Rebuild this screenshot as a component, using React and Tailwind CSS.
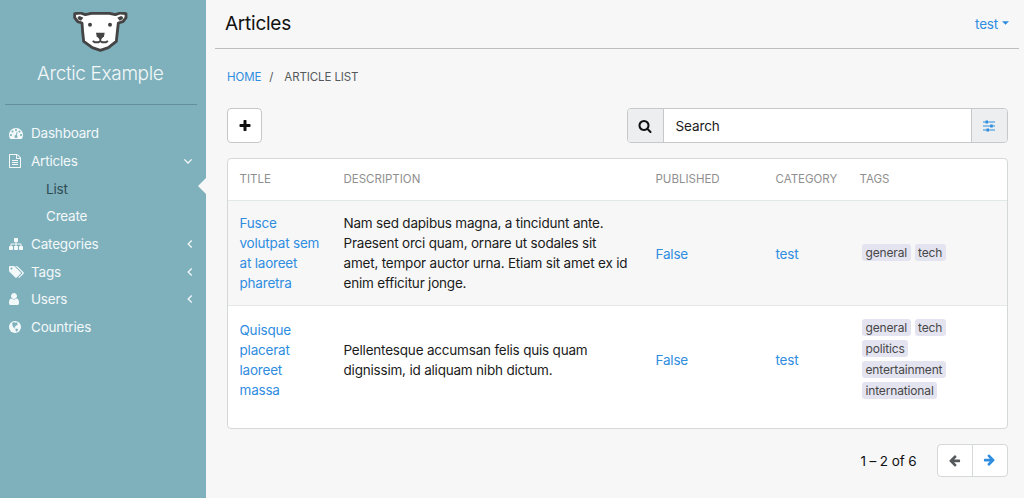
import React from 'react';

const paths = {
  dashboard:
    'M384 1152q0-53-37.5-90.5t-90.5-37.5-90.5 37.5-37.5 90.5 37.5 90.5 90.5 37.5 90.5-37.5 37.5-90.5zm192-448q0-53-37.5-90.5t-90.5-37.5-90.5 37.5-37.5 90.5 37.5 90.5 90.5 37.5 90.5-37.5 37.5-90.5zm428 481l101-382q6-26-7.5-48.5t-38.5-29.5-48 6.5-30 39.5l-101 382q-60 5-107 43.5t-63 98.5q-20 77 20 146t117 89 146-20 89-117q16-60-6-117t-72-91zm660-33q0-53-37.5-90.5t-90.5-37.5-90.5 37.5-37.5 90.5 37.5 90.5 90.5 37.5 90.5-37.5 37.5-90.5zm-640-640q0-53-37.5-90.5t-90.5-37.5-90.5 37.5-37.5 90.5 37.5 90.5 90.5 37.5 90.5-37.5 37.5-90.5zm448 192q0-53-37.5-90.5t-90.5-37.5-90.5 37.5-37.5 90.5 37.5 90.5 90.5 37.5 90.5-37.5 37.5-90.5zm320 448q0 261-141 483-19 29-54 29h-1402q-35 0-54-29-141-221-141-483 0-182 71-348t191-286 286-191 348-71 348 71 286 191 191 286 71 348z',
  file:
    'M1468 380q28 28 48 76t20 88v1152q0 40-28 68t-68 28h-1344q-40 0-68-28t-28-68v-1600q0-40 28-68t68-28h896q40 0 88 20t76 48zm-444-244v376h376q-10-29-22-41l-313-313q-12-12-41-22zm384 1528v-1024h-416q-40 0-68-28t-28-68v-416h-768v1536h1280zm-1024-864q0-14 9-23t23-9h704q14 0 23 9t9 23v64q0 14-9 23t-23 9h-704q-14 0-23-9t-9-23v-64zm736 224q14 0 23 9t9 23v64q0 14-9 23t-23 9h-704q-14 0-23-9t-9-23v-64q0-14 9-23t23-9h704zm0 256q14 0 23 9t9 23v64q0 14-9 23t-23 9h-704q-14 0-23-9t-9-23v-64q0-14 9-23t23-9h704z',
  sitemap:
    'M1792 1248v320q0 40-28 68t-68 28h-320q-40 0-68-28t-28-68v-320q0-40 28-68t68-28h96v-192h-512v192h96q40 0 68 28t28 68v320q0 40-28 68t-68 28h-320q-40 0-68-28t-28-68v-320q0-40 28-68t68-28h96v-192h-512v192h96q40 0 68 28t28 68v320q0 40-28 68t-68 28h-320q-40 0-68-28t-28-68v-320q0-40 28-68t68-28h96v-192q0-52 38-90t90-38h512v-192h-96q-40 0-68-28t-28-68v-320q0-40 28-68t68-28h320q40 0 68 28t28 68v320q0 40-28 68t-68 28h-96v192h512q52 0 90 38t38 90v192h96q40 0 68 28t28 68z',
  tags:
    'M448 448q0-53-37.5-90.5t-90.5-37.5-90.5 37.5-37.5 90.5 37.5 90.5 90.5 37.5 90.5-37.5 37.5-90.5zm1067 576q0 53-37 90l-491 492q-39 37-91 37-53 0-90-37l-715-716q-38-37-64.5-101t-26.5-117v-416q0-52 38-90t90-38h416q53 0 117 26.5t102 64.5l715 714q37 39 37 91zm384 0q0 53-37 90l-491 492q-39 37-91 37-36 0-59-14t-53-45l470-470q37-37 37-90 0-52-37-91l-715-714q-38-38-102-64.5t-117-26.5h224q53 0 117 26.5t102 64.5l715 714q37 39 37 91z',
  user:
    'M1280 1399q0 109-62.5 187t-150.5 78h-854q-88 0-150.5-78t-62.5-187q0-85 8.5-160.5t31.5-152 58.5-131 94-89 134.5-34.5q131 128 313 128t313-128q76 0 134.5 34.5t94 89 58.5 131 31.5 152 8.5 160.5zm-256-887q0 159-112.5 271.5t-271.5 112.5-271.5-112.5-112.5-271.5 112.5-271.5 271.5-112.5 271.5 112.5 112.5 271.5z',
  plus:
    'M1600 736v192q0 40-28 68t-68 28h-416v416q0 40-28 68t-68 28h-192q-40 0-68-28t-28-68v-416h-416q-40 0-68-28t-28-68v-192q0-40 28-68t68-28h416v-416q0-40 28-68t68-28h192q40 0 68 28t28 68v416h416q40 0 68 28t28 68z',
  search:
    'M1216 832q0-185-131.5-316.5t-316.5-131.5-316.5 131.5-131.5 316.5 131.5 316.5 316.5 131.5 316.5-131.5 131.5-316.5zm512 832q0 52-38 90t-90 38q-54 0-90-38l-343-342q-179 124-399 124-143 0-273.5-55.5t-225-150-150-225-55.5-273.5 55.5-273.5 150-225 225-150 273.5-55.5 273.5 55.5 225 150 150 225 55.5 273.5q0 220-124 399l343 343q37 37 37 90z',
  arrow:
    'M1664 896v128q0 53-32.5 90.5t-84.5 37.5h-704l293 294q38 36 38 90t-38 90l-75 76q-37 37-90 37-52 0-91-37l-651-652q-37-37-37-90 0-52 37-91l651-650q38-38 91-38 52 0 90 38l75 74q38 38 38 91t-38 91l-293 293h704q52 0 84.5 37.5t32.5 90.5z',
};

function Icon({ name, className = 'size-3.5' }) {
  return (
    <svg viewBox="0 0 1792 1792" className={`shrink-0 overflow-visible fill-current ${className}`}>
      <path d={paths[name]} />
    </svg>
  );
}

function Globe() {
  return (
    <svg viewBox="0 0 12 12" className="size-3">
      <circle cx="6" cy="6" r="6" className="fill-current" />
      <path
        d="M4.200 1.500 5.500 1 6 1.900 7 1.300 8.600 1.700 8 2.600 8.900 3.100 8.200 4.200 7 4.500 6.300 5.500 5.300 6.100 6.300 7 5.800 7.400 4.300 6.300 3.400 4.600 3.500 3 2.800 2.200Z"
        fill="#7fb1bd"
      />
      <path d="M6.300 8 7.600 7.500 9.100 8.400 8.600 9.700 7.300 10.700 6.700 9.600Z" fill="#7fb1bd" />
    </svg>
  );
}

function Chevron({ open }) {
  return (
    <svg viewBox="0 0 10 10" className="size-2.5 fill-none stroke-current stroke-[1.3]">
      <path d={open ? 'M1.3 3.4 5 7 8.7 3.4' : 'M8.700 1.500 5.200 5l3.500 3.500'} />
    </svg>
  );
}

function Bear() {
  return (
    <svg viewBox="0 0 165 120" className="h-10 w-[55px]">
      <path
        d="M5 5 22 3 37 8 55 4 82 3 109 4 127 8 142 3 159 5 159 17 150 29 136 33 133 60 130 88 106 107 82 115 58 107 32 88 29 60 27 33 14 29 5 17Z"
        fill="#fff"
        stroke="#444444"
        strokeWidth="8.5"
        strokeLinejoin="round"
      />
      <g fill="#444444">
        <path d="M14 15 20 12 31 17 24 26 15 22Z" />
        <path d="M150 15 144 12 133 17 140 26 149 22Z" />
        <circle cx="51" cy="38" r="6" />
        <circle cx="111" cy="38" r="6" />
        <path d="M69 62H95L93 73 85 81H79L71 73Z" />
      </g>
      <path d="M82 79V87L76 91H66L59 87M82 87 88 91H98L105 87" fill="none" stroke="#444444" strokeWidth="6" strokeLinejoin="round" />
    </svg>
  );
}

function NavItem({ icon, label, arrow }) {
  return (
    <a className="flex h-[27.7px] items-center pr-[12.5px] pl-[9px]">
      <span className="flex w-[22px] items-center">{icon}</span>
      <span className="flex-1">{label}</span>
      {arrow && <Chevron open={arrow === 'open'} />}
    </a>
  );
}

function Sidebar() {
  return (
    <aside className="relative flex w-[205.5px] shrink-0 flex-col bg-[#7fb1bd] text-[#f3f8f9]">
      <div className="flex flex-col items-center pt-3 pr-[5px]">
        <Bear />
        <div className="mt-2 text-[19px] leading-7 font-light tracking-[-0.35px]">Arctic Example</div>
      </div>
      <div className="mt-4 mr-[9px] ml-[5px] border-t border-[#628f9a]" />
      <nav className="mt-[14.5px] text-[13.5px] tracking-[-0.2px]">
        <NavItem icon={<Icon name="dashboard" />} label="Dashboard" />
        <NavItem icon={<Icon name="file" />} label="Articles" arrow="open" />
        <a className="flex h-[27.7px] items-center pl-[46px] text-[#2f4c54]">List</a>
        <a className="flex h-[27.7px] items-center pl-[46px]">Create</a>
        <NavItem icon={<Icon name="sitemap" />} label="Categories" arrow="closed" />
        <NavItem icon={<Icon name="tags" />} label="Tags" arrow="closed" />
        <NavItem icon={<Icon name="user" />} label="Users" arrow="closed" />
        <NavItem icon={<Globe />} label="Countries" />
      </nav>
      <svg viewBox="0 0 8 16" className="absolute top-[178px] right-0 h-4 w-2 fill-[#f7f7f7]">
        <path d="M8 0V16L0 8Z" />
      </svg>
    </aside>
  );
}

const rows = [
  {
    title: ['Fusce', 'volutpat sem', 'at laoreet', 'pharetra'],
    description: [
      'Nam sed dapibus magna, a tincidunt ante.',
      'Praesent orci quam, ornare ut sodales sit',
      'amet, tempor auctor urna. Etiam sit amet ex id',
      'enim efficitur jonge.',
    ],
    tags: ['general', 'tech'],
    style: 'h-[104px] bg-[#f7f7f7]',
    cells: 'pt-px',
    tagCell: '-mt-px',
  },
  {
    title: ['Quisque', 'placerat', 'laoreet', 'massa'],
    description: ['Pellentesque accumsan felis quis quam', 'dignissim, id aliquam nibh dictum.'],
    tags: ['general', 'tech', 'politics', 'entertainment', 'international'],
    style: 'h-[109px] border-t border-[#e6e9e9] bg-white',
    cells: '',
    tagCell: '-mt-[3px]',
  },
];

const columns = 'grid grid-cols-[104px_312px_120px_85px_1fr] items-center pl-[11.5px]';

function Lines({ lines }) {
  return lines.map((line) => (
    <div key={line} className="whitespace-nowrap">
      {line}
    </div>
  ));
}

function ArticleTable() {
  return (
    <div className="mt-[15px] h-[271px] overflow-hidden rounded border border-[#d5d8d8] bg-white">
      <div className={`${columns} h-[42px] border-b border-[#e2e9e9] pt-px text-[11.5px] text-[#8f8f8f]`}>
        <div>TITLE</div>
        <div>DESCRIPTION</div>
        <div>PUBLISHED</div>
        <div>CATEGORY</div>
        <div className="-ml-px">TAGS</div>
      </div>
      {rows.map((row) => (
        <div key={row.title[0]} className={`${columns} ${row.style} text-[13.5px] leading-5 tracking-[-0.2px] text-[#1b1b1b]`}>
          <div className="text-[#2f8de0]">
            <Lines lines={row.title} />
          </div>
          <div>
            <Lines lines={row.description} />
          </div>
          <div className={`text-[#2f8de0] ${row.cells}`}>False</div>
          <div className={`text-[#2f8de0] ${row.cells}`}>test</div>
          <div className={`flex w-[100px] flex-wrap gap-1 pl-[1.5px] ${row.tagCell}`}>
            {row.tags.map((tag) => (
              <span key={tag} className="rounded-[3px] bg-[#e4e4f1] px-[3.5px] text-[12px] leading-[17px] tracking-[-0.15px] text-[#474747]">
                {tag}
              </span>
            ))}
          </div>
        </div>
      ))}
    </div>
  );
}

export default function App() {
  return (
    <div className="flex h-[498px] w-[1024px] overflow-hidden bg-[#f7f7f7] font-['Inter',sans-serif]">
      <Sidebar />
      <main className="min-w-0 flex-1">
        <header className="mr-[5px] ml-[9.5px] flex h-[49px] items-center justify-between border-b border-[#bcbebe] pr-2.5 pl-[10px]">
          <h1 className="text-[19px] leading-7 tracking-[-0.25px] text-[#111]">Articles</h1>
          <a className="flex items-center gap-1 text-[13.5px] tracking-[-0.2px] text-[#2f8de0]">
            test
            <svg viewBox="0 0 8 4" className="-mt-0.5 h-1 w-[7px] fill-current">
              <path d="M0 0H8L4 4Z" />
            </svg>
          </a>
        </header>
        <div className="pr-[16.5px] pl-[21.5px]">
          <div className="mt-[18px] flex h-5 items-center pt-px text-[11.5px] tracking-[-0.1px] text-[#55595c]">
            <a className="text-[#2f8de0]">HOME</a>
            <span className="ml-2">/</span>
            <span className="ml-[11px]">ARTICLE LIST</span>
          </div>
          <div className="mt-[21px] flex h-[35px] justify-between">
            <button className="flex w-[35px] items-center justify-center rounded border border-[#c6c8c8] bg-white text-[#111]">
              <Icon name="plus" />
            </button>
            <div className="flex w-[381px] overflow-hidden rounded border border-[#c6c9cb] bg-white">
              <span className="flex w-9 items-center justify-center border-r border-[#c6c9cb] bg-[#eceeef] text-[#111]">
                <Icon name="search" />
              </span>
              <span className="flex flex-1 items-center pt-px pl-[12px] text-[13.5px] tracking-[-0.1px] text-[#1b1b1b]">Search</span>
              <span className="flex w-9 items-center justify-center border-l border-[#c6c9cb] bg-[#eceeef] text-[#2f8de0]">
                <svg viewBox="0 0 12 12" className="size-3 fill-current">
                  <path d="M0 1.500h12v1H0zM0 5.500h12v1H0zM0 9.500h12v1H0z" />
                  <path d="M2.500 .5h2.500v3H2.500zM7.200 4.500h2.500v3H7.200zM3.500 8.500h2.500v3H3.500z" />
                </svg>
              </span>
            </div>
          </div>
          <ArticleTable />
          <div className="mt-[15px] flex items-center justify-end">
            <span className="mr-5 pt-px text-[13.5px] tracking-[-0.1px] text-[#111]">1 – 2 of 6</span>
            <div className="flex h-[33px] w-[71px] overflow-hidden rounded border border-[#d5d8d8] bg-white">
              <button className="flex w-[35px] items-center justify-center border-r border-[#d5d8d8] text-[#55595c]">
                <Icon name="arrow" className="size-[13px]" />
              </button>
              <button className="flex flex-1 items-center justify-center text-[#2f8de0]">
                <Icon name="arrow" className="size-[13px] rotate-180" />
              </button>
            </div>
          </div>
        </div>
      </main>
    </div>
  );
}
